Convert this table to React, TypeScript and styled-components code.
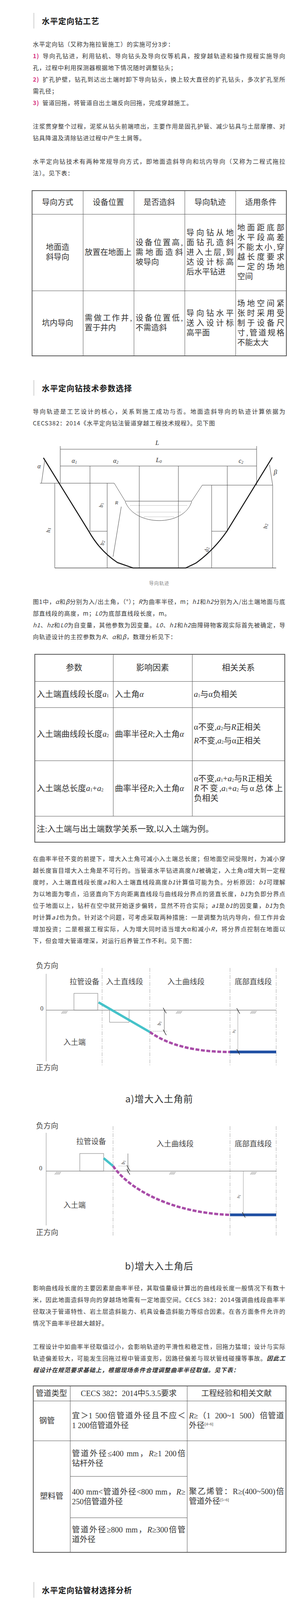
import React from "react";
import styled, { createGlobalStyle } from "styled-components";

const GlobalStyle = createGlobalStyle`
  html, body { margin: 0; padding: 0; background: #fff; }
  body { font-family: "Noto Sans CJK SC", "Noto Sans", sans-serif; }
`;

const Page = styled.main`
  box-sizing: border-box;
  width: 772px;
  padding: 33px 42px 24px 84px;
  color: #333;
`;

const SectionTitle = styled.h2<{ $top?: number }>`
  display: flex;
  align-items: center;
  box-sizing: border-box;
  height: 40px;
  margin: ${(p) => p.$top ?? 0}px 0 25px 1px;
  padding-left: 19px;
  border-left: 3px solid #dedede;
  font-size: 20px;
  font-weight: 700;
  letter-spacing: 1px;
  color: #1a1a1a;
`;

const Para = styled.p<{ $top?: number }>`
  margin: ${(p) => p.$top ?? 0}px 0 0;
  font-size: 15px;
  line-height: 30px;
  letter-spacing: 1px;
  text-align: justify;
  color: #333;
`;

const Num = styled.span<{ $italic?: boolean; $tight?: boolean }>`
  color: #d6337f;
  font-weight: 700;
  font-style: ${(p) => (p.$italic ? "italic" : "normal")};
  letter-spacing: ${(p) => (p.$tight ? 0 : 1)}px;
  margin-right: ${(p) => (p.$tight ? 2 : 8)}px;
`;

const Keep = styled.span`
  white-space: nowrap;
`;

const Var = styled.i`
  font-style: italic;
`;

const Emph = styled.strong`
  font-weight: 700;
  font-style: italic;
`;

const Table = styled.table<{ $width: number; $shift?: number; $top: number; $size: number; $lh: number; $track?: number }>`
  width: ${(p) => p.$width}px;
  margin: ${(p) => p.$top}px 0 0 ${(p) => p.$shift ?? 0}px;
  border-collapse: collapse;
  table-layout: fixed;
  font-family: "Liberation Serif", "Noto Sans CJK SC", serif;
  font-size: ${(p) => p.$size}px;
  line-height: ${(p) => p.$lh}px;
  letter-spacing: ${(p) => p.$track ?? 0}px;
  color: #333;
  border: 2px solid #555;
`;

const Col = styled.col<{ $w: number }>`
  width: ${(p) => p.$w}px;
`;

const Row = styled.tr<{ $h: number }>`
  height: ${(p) => p.$h}px;
`;

const Cell = styled.td<{ $align?: "left" | "center"; $padLeft?: number; $nowrap?: boolean }>`
  box-sizing: border-box;
  border: 1.5px solid #555;
  padding: 0 4px 0 ${(p) => p.$padLeft ?? 4}px;
  text-align: ${(p) => p.$align ?? "left"};
  vertical-align: middle;
  white-space: ${(p) => (p.$nowrap ? "nowrap" : "normal")};
`;

const CellLine = styled.span<{ $fill?: boolean; $gap?: number }>`
  display: block;
  margin-top: ${(p) => p.$gap ?? 0}px;
  text-align: ${(p) => (p.$fill ? "justify" : "inherit")};
  text-align-last: ${(p) => (p.$fill ? "justify" : "auto")};
`;

const Sym = styled.i`
  font-family: "Liberation Serif", serif;
  font-style: italic;
`;

const Sub = styled.sub`
  font-size: 0.55em;
  line-height: 0;
  vertical-align: -0.1em;
`;

const Sup = styled.sup`
  font-size: 0.5em;
  line-height: 0;
  vertical-align: 0.7em;
`;

const Drawing = styled.svg`
  display: block;
  overflow: visible;
  font-family: "Liberation Serif", "Noto Sans CJK SC", serif;
`;

const Caption = styled.p<{ $size: number; $lh: number; $color: string }>`
  margin: 0;
  text-align: center;
  font-size: ${(p) => p.$size}px;
  line-height: ${(p) => p.$lh}px;
  letter-spacing: 1px;
  color: ${(p) => p.$color};
`;

const Small = styled.span`
  font-size: 12px;
  letter-spacing: -0.3px;
`;

type LinesProps = { lines: React.ReactNode[]; fill?: boolean };
const Lines = ({ lines, fill = true }: LinesProps) => (
  <>
    {lines.map((l, i) => (
      <CellLine key={i} $fill={fill && i < lines.length - 1}>
        {l}
      </CellLine>
    ))}
  </>
);

const a1 = (
  <>
    <Sym>a</Sym>
    <Sub>1</Sub>
  </>
);
const a2 = (
  <>
    <Sym>a</Sym>
    <Sub>2</Sub>
  </>
);

/* ---------- small svg helpers ---------- */
const Hatch = ({ x, y }: { x: number; y: number }) => (
  <g stroke="#666" strokeWidth={1}>
    {[0, 1, 2, 3].map((i) => (
      <line key={i} x1={x + i * 3.5} y1={y + 9} x2={x + i * 3.5 + 5} y2={y + 2} />
    ))}
  </g>
);

const Tick = ({ x, y }: { x: number; y: number }) => (
  <line x1={x - 4} y1={y - 7} x2={x + 4} y2={y + 7} stroke="#222" strokeWidth={1.4} />
);

const DimLabel = ({ x, y, n, size = 12 }: { x: number; y: number; n: string; size?: number }) => (
  <text
    x={x}
    y={y}
    fontSize={size}
    fontStyle="italic"
    textAnchor="middle"
    fill="#333"
    transform={`rotate(-90 ${x} ${y})`}
  >
    {n[0]}
    <tspan fontSize={size * 0.7} dy={2}>
      {n[1]}
    </tspan>
  </text>
);

const TrackFigure = () => (
  <Drawing width={646} height={380} viewBox="84 1098 646 380">
    <g stroke="#444" strokeWidth={1} fill="none">
      <line x1={154} y1={1150} x2={656} y2={1150} />
      <line x1={154} y1={1193} x2={656} y2={1193} />
      <line x1={154} y1={1142} x2={154} y2={1237} />
      <line x1={656} y1={1142} x2={656} y2={1242} />
      <line x1={230} y1={1193} x2={230} y2={1360} />
      <line x1={356} y1={1193} x2={356} y2={1454} />
      <line x1={456} y1={1193} x2={456} y2={1454} />
      <line x1={581} y1={1193} x2={581} y2={1360} />
      <line x1={140} y1={1237} x2={140} y2={1454} />
      <line x1={274} y1={1237} x2={274} y2={1454} />
      <line x1={541} y1={1242} x2={541} y2={1454} />
      <line x1={697} y1={1242} x2={697} y2={1454} />
      <line x1={102} y1={1237} x2={292} y2={1237} />
      <line x1={517} y1={1242} x2={697} y2={1242} />
      <line x1={230} y1={1360} x2={274} y2={1360} />
      <line x1={541} y1={1360} x2={581} y2={1360} />
      <polyline points="292,1237 320,1283 490,1283 517,1242" />
      <path d="M320 1284 C345 1349 470 1349 490 1284" />
      <g strokeDasharray="1 2">
        <line x1={333} y1={1294} x2={478} y2={1294} />
        <line x1={350} y1={1311} x2={463} y2={1311} />
        <line x1={368} y1={1323} x2={445} y2={1323} />
      </g>
      <line x1={114} y1={1180} x2={106} y2={1237} />
      <line x1={689} y1={1190} x2={697} y2={1242} />
      <line x1={310} y1={1297} x2={289} y2={1425} />
      <line x1={140} y1={1454} x2={706} y2={1454} strokeWidth={1.6} stroke="#555" />
    </g>
    <path
      d="M111 1172 L227 1360 Q255 1410 300 1440 L340 1454 L475 1454 L500 1442 Q545 1410 580 1360 L696 1171"
      stroke="#1a1a1a"
      strokeWidth={2.6}
      fill="none"
    />
    <g fill="#333" fontStyle="italic">
      <text x={402} y={1139} fontSize={17} textAnchor="middle">L</text>
      <text x={406} y={1183} fontSize={17} textAnchor="middle">
        L<tspan fontSize={11} dy={2}>0</tspan>
      </text>
      <text x={190} y={1185} fontSize={16} textAnchor="middle">
        α<tspan fontSize={10} dy={2}>1</tspan>
      </text>
      <text x={296} y={1185} fontSize={16} textAnchor="middle">
        α<tspan fontSize={10} dy={2}>2</tspan>
      </text>
      <text x={616} y={1185} fontSize={16} textAnchor="middle">
        c<tspan fontSize={10} dy={2}>2</tspan>
      </text>
      <text x={100} y={1199} fontSize={16} textAnchor="middle">α</text>
      <text x={704} y={1214} fontSize={17} textAnchor="middle">β</text>
      <text x={298} y={1291} fontSize={13} textAnchor="middle">R</text>
    </g>
    <DimLabel x={128} y={1357} n="h1" size={15} />
    <DimLabel x={683} y={1347} n="h2" size={15} />
    <DimLabel x={263} y={1293} n="b1" size={14} />
    <DimLabel x={266} y={1390} n="b2" size={14} />
    <DimLabel x={533} y={1407} n="d2" size={14} />
  </Drawing>
);

const labelProps = { fill: "#444", fontSize: 19 } as const;

const AngleBefore = () => (
  <Drawing width={646} height={369} viewBox="84 2423 646 369">
    <text x={92} y={2479} {...labelProps}>负方向</text>
    <text x={92} y={2740} {...labelProps}>正方向</text>
    <line x1={118} y1={2493} x2={118} y2={2717} stroke="#888" />
    <g stroke="#a0a0a0" strokeDasharray="10 3 2 3">
      <line x1={261} y1={2478} x2={261} y2={2727} />
      <line x1={383} y1={2478} x2={383} y2={2727} />
      <line x1={588} y1={2478} x2={588} y2={2727} />
      <line x1={706} y1={2478} x2={706} y2={2727} />
    </g>
    <text x={178} y={2520} {...labelProps}>拉管设备</text>
    <text x={271} y={2520} {...labelProps}>入土直线段</text>
    <text x={428} y={2520} {...labelProps}>入土曲线段</text>
    <text x={600} y={2520} {...labelProps}>底部直线段</text>
    <rect x={189} y={2543} width={61} height={43} fill="none" stroke="#777" />
    <text x={103} y={2587} fill="#444" fontSize={16}>0</text>
    <line x1={118} y1={2586} x2={706} y2={2586} stroke="#8a8a8a" strokeWidth={1.5} />
    <Hatch x={157} y={2586} />
    <Hatch x={450} y={2586} />
    <Hatch x={640} y={2586} />
    <polyline points="280,2586 280,2617 330,2617 330,2586" fill="none" stroke="#777" />
    <line x1={252} y1={2566} x2={383} y2={2642} stroke="#45c2c9" strokeWidth={6} />
    <line x1={420} y1={2586} x2={420} y2={2642} stroke="#555" />
    <Tick x={421} y={2587} />
    <Tick x={421} y={2643} />
    <line x1={385} y1={2640} x2={427} y2={2640} stroke="#999" strokeDasharray="3 2" />
    <DimLabel x={411} y={2620} n="b1" />
    <path d="M383 2642 Q455 2693 588 2693" fill="none" stroke="#a84ca8" strokeWidth={6} strokeDasharray="10 4" />
    <line x1={588} y1={2693} x2={706} y2={2693} stroke="#1f4fa3" strokeWidth={7} />
    <line x1={608} y1={2586} x2={608} y2={2693} stroke="#999" />
    <Tick x={609} y={2588} />
    <Tick x={609} y={2693} />
    <DimLabel x={601} y={2640} n="h1" size={11} />
    <text x={162} y={2675} {...labelProps}>入土端</text>
  </Drawing>
);

const AngleAfter = () => (
  <Drawing width={646} height={388} viewBox="84 2832 646 388">
    <text x={92} y={2889} {...labelProps}>负方向</text>
    <text x={92} y={3162} {...labelProps}>正方向</text>
    <line x1={118} y1={2900} x2={118} y2={3137} stroke="#888" />
    <g stroke="#a0a0a0" strokeDasharray="10 3 2 3">
      <line x1={289} y1={2883} x2={289} y2={3163} />
      <line x1={588} y1={2883} x2={588} y2={3163} />
      <line x1={706} y1={2883} x2={706} y2={3163} />
    </g>
    <text x={195} y={2929} {...labelProps}>拉管设备</text>
    <text x={400} y={2935} {...labelProps}>入土曲线段</text>
    <text x={600} y={2935} {...labelProps}>底部直线段</text>
    <rect x={204} y={2953} width={61} height={45} fill="none" stroke="#777" />
    <text x={100} y={2996} fill="#444" fontSize={16}>0</text>
    <line x1={118} y1={2998} x2={706} y2={2998} stroke="#8a8a8a" strokeWidth={1.5} />
    <Hatch x={140} y={2998} />
    <Hatch x={433} y={2998} />
    <Hatch x={640} y={2998} />
    <line x1={265} y1={2965} x2={289} y2={2985} stroke="#45c2c9" strokeWidth={6} />
    <line x1={327} y1={2953} x2={327} y2={3003} stroke="#555" />
    <Tick x={328} y={2990} />
    <Tick x={328} y={3000} />
    <line x1={303} y1={2985} x2={333} y2={2985} stroke="#999" strokeDasharray="3 2" />
    <DimLabel x={319} y={2976} n="b1" />
    <path d="M289 2985 C330 3045 440 3105 588 3110" fill="none" stroke="#a84ca8" strokeWidth={6} strokeDasharray="10 4" />
    <line x1={588} y1={3110} x2={706} y2={3110} stroke="#1f4fa3" strokeWidth={7} />
    <line x1={622} y1={2998} x2={622} y2={3110} stroke="#999" />
    <Tick x={623} y={3110} />
    <DimLabel x={613} y={3063} n="h1" size={11} />
    <text x={162} y={3092} {...labelProps}>入土端</text>
  </Drawing>
);

const radiusRows: [string, string, ...(number | string)[]][] = [
  ["钢管", "1 200倍管道外径", 138, 263, 389, 488, 610, 854, 976, "1 371"],
  ["PE 管", "400倍管道外径", 44, 90, 126, 160, 200, 252, 320, 360],
  ["球墨铸铁管", "数学计算", 113, 113, 113, 113, 169, 169, 169, 225],
];
const dnHeads = [100, 200, 300, 400, 500, 600, 800, 900];
const dnWidths = [66.5, 66.5, 66.5, 67, 66.5, 66.5, 63, 60];

export default function App() {
  return (
    <>
      <GlobalStyle />
      <Page>
        <SectionTitle>水平定向钻工艺</SectionTitle>
        <Para>水平定向钻（又称为拖拉管施工）的实施可分3步：</Para>
        <Para>
          <Num>1)</Num>导向孔钻进，利用钻机、导向钻头及导向仪等机具，按穿越轨迹和操作规程实施导向孔，过程中利用探测器根据地下情况随时调整钻头；
        </Para>
        <Para>
          <Num>2)</Num>扩孔护壁，钻孔到达出土端时卸下导向钻头，换上较大直径的扩孔钻头，多次扩孔至所需<Keep>孔径；</Keep>
        </Para>
        <Para>
          <Num>3)</Num>管道回拖，将管道自出土端反向回拖，完成穿越施工。
        </Para>
        <Para $top={30}>
          注浆贯穿整个过程，泥浆从钻头前端喷出，主要作用是固孔护管、减少钻具与土层摩擦、对钻具降温及清除钻进过程中产生土屑等。
        </Para>
        <Para $top={30}>
          水平定向钻技术有两种常规导向方式，即地面造斜导向和坑内导向（又称为二程式拖拉法）。见下表：
        </Para>

        <Table $width={650} $shift={-3} $top={29} $size={20} $lh={25}>
          <colgroup>
            {[130, 130, 130, 130, 130].map((w, i) => (
              <Col key={i} $w={w} />
            ))}
          </colgroup>
          <tbody>
            <Row $h={60}>
              {["导向方式", "设备位置", "是否造斜", "导向轨迹", "适用条件"].map((h) => (
                <Cell key={h} $align="center">
                  {h}
                </Cell>
              ))}
            </Row>
            <Row $h={196}>
              <Cell $align="center">
                <Lines lines={["地面造", "斜导向"]} fill={false} />
              </Cell>
              <Cell>放置在地面上</Cell>
              <Cell>
                <Lines lines={["设备位置高,", "需地面造斜", "坡导向"]} />
              </Cell>
              <Cell>
                <Lines lines={["导向钻从地", "面钻孔造斜", "进入土层,到", "达设计标高", "后水平钻进"]} />
              </Cell>
              <Cell>
                <Lines lines={["地面距底部", "水平段高差", "不能太小,穿", "越长度要求", "一定的场地", "空间"]} />
              </Cell>
            </Row>
            <Row $h={167}>
              <Cell $align="center">坑内导向</Cell>
              <Cell>
                <Lines lines={["需做工作井,", "置于井内"]} />
              </Cell>
              <Cell>
                <Lines lines={["设备位置低,", "不需造斜"]} />
              </Cell>
              <Cell>
                <Lines lines={["导向钻水平", "送入设计标", "高平面"]} />
              </Cell>
              <Cell>
                <Lines lines={["场地空间紧", "张时采用受", "制于设备尺", "寸,管道规格", "不能太大"]} />
              </Cell>
            </Row>
          </tbody>
        </Table>

        <SectionTitle $top={61}>水平定向钻技术参数选择</SectionTitle>
        <Para>
          导向轨迹是工艺设计的核心，关系到施工成功与否。地面造斜导向的轨迹计算依据为CECS382：2014《水平定向钻法管道穿越工程技术规程》。见下图
        </Para>
        <TrackFigure />
        <Caption $size={12} $lh={30} $color="#888">
          导向轨迹
        </Caption>
        <Para $top={17}>
          图1中，<Var>α</Var>和<Var>β</Var>分别为入/出土角，（°）；<Var>R</Var>为曲率半径，m；<Var>h1</Var>和<Var>h2</Var>分别为入/出土端地面与底部直线段的高度，m；<Var>L0</Var>为底部直线段长度，m。
        </Para>
        <Para>
          <Var>h1</Var>、<Var>hz</Var>和<Var>L0</Var>为自变量，其他参数为因变量。<Var>L0</Var>、<Var>h1</Var>和<Var>h2</Var>由障碍物客观实际首先被确定，导向轨迹设计的主控参数为<Var>R</Var>、<Var>α</Var>和<Var>β</Var>，数理分析见下：
        </Para>

        <Table $width={639} $shift={4} $top={29} $size={21} $lh={25}>
          <colgroup>
            <Col $w={200} />
            <Col $w={202} />
            <Col $w={237} />
          </colgroup>
          <tbody>
            <Row $h={69}>
              <Cell $align="center">参数</Cell>
              <Cell $align="center">影响因素</Cell>
              <Cell $align="center">相关关系</Cell>
            </Row>
            <Row $h={67}>
              <Cell>入土端直线段长度{a1}</Cell>
              <Cell>
                入土角<Sym>α</Sym>
              </Cell>
              <Cell>{a1}与α负相关</Cell>
            </Row>
            <Row $h={136}>
              <Cell>入土端曲线段长度{a2}</Cell>
              <Cell>
                曲率半径<Sym>R</Sym>;入土角<Sym>α</Sym>
              </Cell>
              <Cell>
                <CellLine>
                  α不变,{a2}与<Sym>R</Sym>正相关
                </CellLine>
                <CellLine $gap={10}>
                  <Sym>R</Sym>不变,{a2}与α正相关
                </CellLine>
              </Cell>
            </Row>
            <Row $h={142}>
              <Cell>
                入土端总长度{a1}+{a2}
              </Cell>
              <Cell>
                曲率半径<Sym>R</Sym>;入土角<Sym>α</Sym>
              </Cell>
              <Cell>
                <CellLine>
                  α不变,{a1}+{a2}与R正相关
                </CellLine>
                <CellLine $fill>
                  <Sym>R</Sym>不变,{a1}+{a2}与α总体上
                </CellLine>
                <CellLine>负相关</CellLine>
              </Cell>
            </Row>
            <Row $h={67}>
              <Cell colSpan={3}>注:入土端与出土端数学关系一致,以入土端为例。</Cell>
            </Row>
          </tbody>
        </Table>

        <Para $top={26}>
          在曲率半径不变的前提下，增大入土角可减小入土端总长度；但地面空间受限时，为减小穿越长度盲目增大入土角是不可行的。当管道水平钻进高度<Var>h1</Var>被确定，入土角<Var>α</Var>增大到一定程度时，入土端直线段长度<Var>a1</Var>和入土端直线段高度<Var>b1</Var>计算值可能为负。分析原因：<Var>b1</Var>可理解为以地面为零点，沿竖直向下方向距离直线段与曲线段分界点的竖直长度，<Var>b1</Var>为负即分界点位于地面以上，钻杆在空中就开始逐步偏转，显然不符合实际；<Var>a1</Var>是<Var>b1</Var>的因变量，<Var>b1</Var>为负时计算<Var>a1</Var>也为负。针对这个问题，可考虑采取两种措施：一是调整为坑内导向，但工作井会增加投资；二是根据工程实际，人为增大同时适当增大α和减小<Var>R</Var>，将分界点控制在地面以下，但会增大管道埋深，对运行后养管工作不利。见下图：
        </Para>

        <AngleBefore />
        <Caption $size={24} $lh={40} $color="#333">
          a)增大入土角前
        </Caption>
        <AngleAfter />
        <Caption $size={24} $lh={40} $color="#333">
          b)增大入土角后
        </Caption>

        <Para $top={22}>
          影响曲线段长度的主要因素是曲率半径，其取值量级计算出的曲线段长度一般情况下有数十米，因此地面造斜导向的穿越场地需有一定地面空间。CECS 382：2014强调曲线段曲率半径取决于管道特性、岩土层造斜能力、机具设备造斜能力等综合因素。在各方面条件允许的情况下曲率半径越大越好。
        </Para>
        <Para $top={30}>
          工程设计中如曲率半径取值过小，会影响轨迹的平滑性和稳定性，回拖力猛增；设计与实际轨迹偏差较大，可能发生回拖过程中管道变形，因路径偏差与现状管线碰撞等事故。
          <Emph>因此工程设计在规范要求基础上，根据现场条件合理调整曲率半径取值。见下表：</Emph>
        </Para>

        <Table $width={646} $top={25} $size={20} $lh={25}>
          <colgroup>
            <Col $w={94.5} />
            <Col $w={299} />
            <Col $w={252.5} />
          </colgroup>
          <tbody>
            <Row $h={38}>
              <Cell $align="center" $padLeft={2}>
                管道类型
              </Cell>
              <Cell $align="center">CECS 382：2014中5.3.5要求</Cell>
              <Cell $align="center">工程经验和相关文献</Cell>
            </Row>
            <Row $h={102}>
              <Cell $padLeft={14}>钢管</Cell>
              <Cell>
                <Lines lines={["宜＞1 500倍管道外径且不应＜", "1 200倍管道外径"]} />
              </Cell>
              <Cell>
                <Lines
                  lines={[
                    <>
                      <Sym>R</Sym>≥（1&nbsp;&nbsp;200~1&nbsp;&nbsp;500）倍管道
                    </>,
                    <>
                      外径<Sup>[4~6]</Sup>
                    </>,
                  ]}
                />
              </Cell>
            </Row>
            <Row $h={91}>
              <Cell $padLeft={16} rowSpan={3}>
                塑料管
              </Cell>
              <Cell>
                <Lines
                  lines={[
                    <>
                      管道外径≤400 mm，<Sym>R</Sym>≥1 200倍
                    </>,
                    "钻杆外径",
                  ]}
                />
              </Cell>
              <Cell rowSpan={3}>
                <Lines
                  lines={[
                    "聚乙烯管：R≥(400~500)倍",
                    <>
                      管道外径<Sup>[5~6]</Sup>
                    </>,
                  ]}
                />
              </Cell>
            </Row>
            <Row $h={106}>
              <Cell>
                <Lines
                  lines={[
                    <>
                      400 mm&lt;管道外径&lt;800 mm，<Sym>R</Sym>≥
                    </>,
                    "250倍管道外径",
                  ]}
                />
              </Cell>
            </Row>
            <Row $h={89}>
              <Cell>
                <Lines
                  lines={[
                    <>
                      管道外径≥800 mm，<Sym>R</Sym>≥300倍管
                    </>,
                    "道外径",
                  ]}
                />
              </Cell>
            </Row>
          </tbody>
        </Table>

        <SectionTitle $top={75}>水平定向钻管材选择分析</SectionTitle>
        <Para>
          水平定向钻技术采用的管材主要有钢管和聚乙烯管（以下简称为PE管），近年来球墨铸铁管也开始得到应用。因特性不同，管材用于水平定向钻技术的特点差异显著。
        </Para>
        <Para $top={30}>
          整体性连接的钢管和PE管均依靠自身柔性实现管道弯曲，曲率半径计算原则一致。因钢管柔性明显低于PE管，两者曲率半径相差明显，钢管适合长距离穿越。球墨铸铁管为非整体性连接，依靠接口偏转实现管道弯曲，曲率半径根据管节长度和接口允许最大偏转角计算，管道规格被划分成若干区间，所以球墨铸铁管理论最小曲率半径并非逐级增大。
        </Para>
        <Para $top={30}>
          <Num $italic $tight>1) 钢管：</Num>管材屈服强度大，抗扭和抗外力破坏能力强；管节长度大，管道柔性较低，管道回拖场地所需空间大。
        </Para>
        <Para $top={30}>
          <Num $italic $tight>2) PE管：</Num>管材耐腐蚀、防渗性好，抗刮磨；接口热熔连接，密封可靠；高柔性，管道回拖场地所需空间较小；管材抗拉强度低，管道无法承受很大的回拖力，穿越长度受限制；为控制管道变形，建议管材级别采用PE100，标准尺寸比采用SDR117-8。
        </Para>
        <Para $top={30}>
          <Num $italic $tight>3) 球墨铸铁管：</Num>依靠接口偏转实现管道弯曲；耐腐蚀；管节长度较大，管道柔性较低，管道回拖场地所需空间较大；采用自锚式接口，抗拉能力强，可实现长距离穿越；接口安装速度较快；.因接口尺寸，扩孔直径略大于同管径钢管和PE管；综合造价较高，尚未推广应用。
        </Para>
        <Para $top={30}>根据CECS382：2014并结合工程经验，3种管材理论的曲率半径下限值见下表：</Para>

        <Table $width={682} $shift={-18} $top={13} $size={11} $lh={14} $track={-0.4}>
          <colgroup>
            <Col $w={65} />
            <Col $w={94.5} />
            {dnWidths.map((w, i) => (
              <Col key={i} $w={w} />
            ))}
          </colgroup>
          <tbody>
            <Row $h={38}>
              <Cell $align="center" $nowrap>
                管材
              </Cell>
              <Cell $align="center" $nowrap>
                数理关系
              </Cell>
              {dnHeads.map((d) => (
                <Cell key={d} $align="center" $nowrap $padLeft={2}>
                  <Small>DN{d} mm</Small>
                </Cell>
              ))}
            </Row>
            {radiusRows.map(([kind, rule, ...vals], r) => (
              <Row key={kind} $h={r === 1 ? 38 : 37}>
                <Cell $nowrap $padLeft={3}>
                  {kind}
                </Cell>
                <Cell $nowrap $padLeft={5}>
                  {rule}
                </Cell>
                {vals.map((v, i) => (
                  <Cell key={i} $align="center" $nowrap>
                    <Small>{v}</Small>
                  </Cell>
                ))}
              </Row>
            ))}
          </tbody>
        </Table>

        <SectionTitle $top={80}>结论</SectionTitle>
        <Para>
          水平定向钻技术的导向轨迹设计关系到方案的技术合理性和工程经济性，应结合穿越场地的土质和空间合理选取主控参数；管材选择除遵循专业领域要求外，还应结合管材特性和工程实际因地制宜、择优使用。
        </Para>
      </Page>
    </>
  );
}
